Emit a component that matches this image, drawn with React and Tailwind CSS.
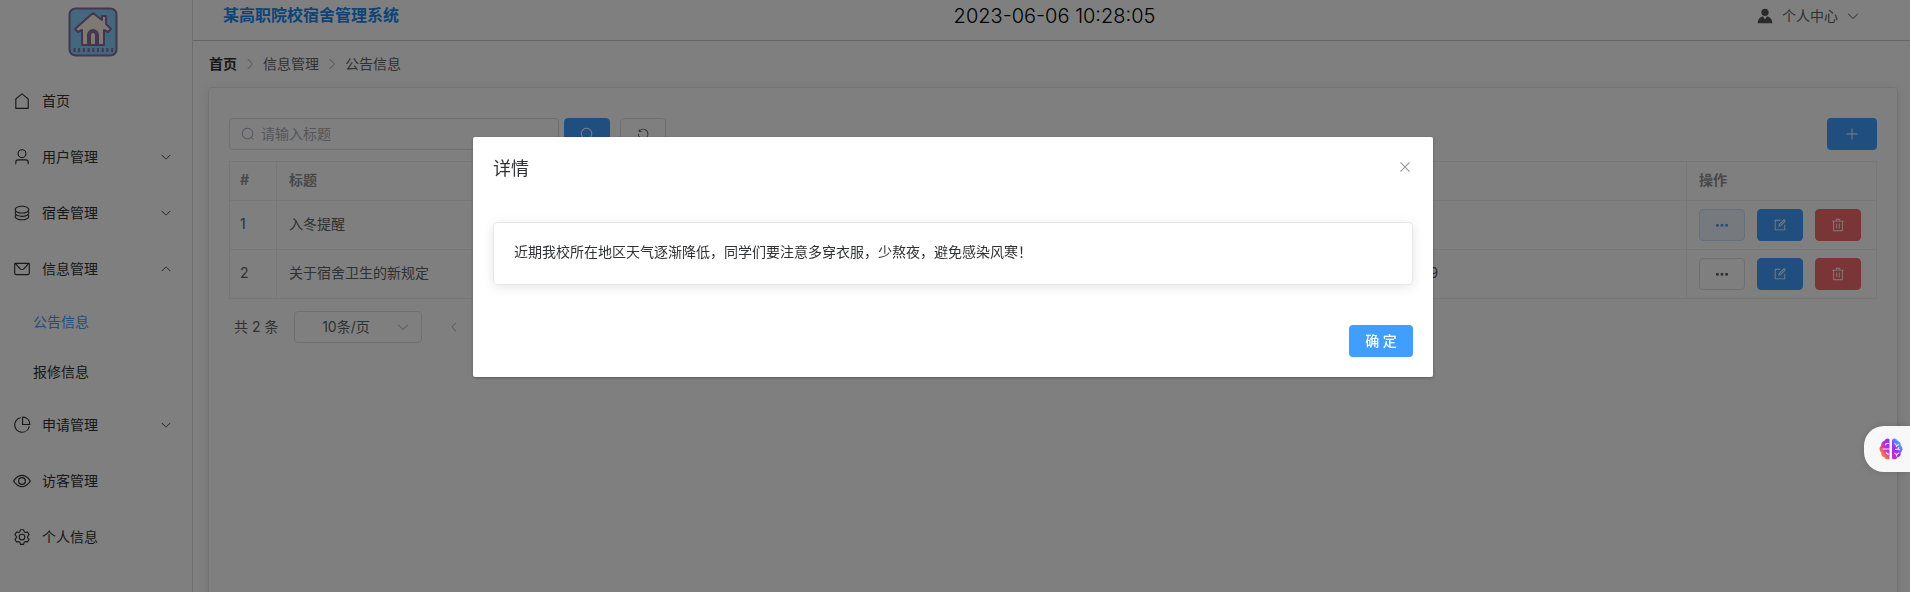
import React, { useId } from 'react';

const PATHS = {
  arrowDown: [
    'M831.872 340.864 512 652.672 192.128 340.864a30.592 30.592 0 0 0-42.752 0 29.12 29.12 0 0 0 0 41.6L489.664 714.24a32 32 0 0 0 44.672 0l340.288-331.712a29.12 29.12 0 0 0 0-41.728 30.592 30.592 0 0 0-42.752 0z',
  ],
  arrowRight: [
    'M340.864 149.312a30.592 30.592 0 0 0 0 42.752L652.736 512 340.864 831.872a30.592 30.592 0 0 0 0 42.752 29.12 29.12 0 0 0 41.728 0L714.24 534.336a32 32 0 0 0 0-44.672L382.592 149.376a29.12 29.12 0 0 0-41.728 0z',
  ],
  close: [
    'M764.288 214.592 512 466.88 259.712 214.592a31.936 31.936 0 0 0-45.12 45.12L466.752 512 214.528 764.224a31.936 31.936 0 1 0 45.12 45.184L512 557.184l252.288 252.288a31.936 31.936 0 0 0 45.12-45.12L557.12 512.064l252.288-252.352a31.936 31.936 0 1 0-45.12-45.184z',
  ],
  search: [
    'm795.904 750.72 124.992 124.928a32 32 0 0 1-45.248 45.248L750.656 795.904a416 416 0 1 1 45.248-45.248zM480 832a352 352 0 1 0 0-704 352 352 0 0 0 0 704z',
  ],
  house: [
    'M192 413.952V896h640V413.952L512 147.328 192 413.952zM139.52 374.4l352-293.312a32 32 0 0 1 40.96 0l352 293.312A32 32 0 0 1 896 398.976V928a32 32 0 0 1-32 32H160a32 32 0 0 1-32-32V398.976a32 32 0 0 1 11.52-24.576z',
  ],
  user: [
    'M512 512a192 192 0 1 0 0-384 192 192 0 0 0 0 384m0 64a256 256 0 1 1 0-512 256 256 0 0 1 0 512zm320 320v-96a96 96 0 0 0-96-96H288a96 96 0 0 0-96 96v96a32 32 0 1 1-64 0v-96a160 160 0 0 1 160-160h448a160 160 0 0 1 160 160v96a32 32 0 1 1-64 0z',
  ],
  coin: [
    'm161.92 580.736 29.888 58.88C171.328 659.776 160 681.728 160 704c0 82.304 155.328 160 352 160s352-77.696 352-160c0-22.272-11.392-44.16-31.808-64.32l30.464-58.432C903.936 615.808 928 657.664 928 704c0 129.728-188.544 224-416 224S96 833.728 96 704c0-46.592 24.32-88.576 65.92-123.264z',
    'm161.92 388.736 29.888 58.88C171.328 467.84 160 489.792 160 512c0 82.304 155.328 160 352 160s352-77.696 352-160c0-22.272-11.392-44.16-31.808-64.32l30.464-58.432C903.936 423.808 928 465.664 928 512c0 129.728-188.544 224-416 224S96 641.728 96 512c0-46.592 24.32-88.576 65.92-123.264z',
    'M512 544c-227.456 0-416-94.272-416-224S284.544 96 512 96s416 94.272 416 224-188.544 224-416 224zm0-64c196.672 0 352-77.696 352-160S708.672 160 512 160s-352 77.696-352 160 155.328 160 352 160z',
  ],
  message: [
    'M128 224v512a64 64 0 0 0 64 64h640a64 64 0 0 0 64-64V224H128zm0-64h768a64 64 0 0 1 64 64v512a128 128 0 0 1-128 128H192A128 128 0 0 1 64 736V224a64 64 0 0 1 64-64z',
    'M904 224 656.512 506.88a192 192 0 0 1-289.024 0L120 224h784zm-698.944 0 210.56 240.704a128 128 0 0 0 192.704 0L818.944 224H205.056z',
  ],
  pie: [
    'M448 68.48v64.832A384.128 384.128 0 0 0 512 896a384.128 384.128 0 0 0 378.688-320h64.768A448.128 448.128 0 0 1 64 512 448.128 448.128 0 0 1 448 68.48z',
    'M576 97.28V448h350.72A384.064 384.064 0 0 0 576 97.28zM512 64V33.152A448 448 0 0 1 990.848 512H512V64z',
  ],
  view: [
    'M512 160c320 0 512 352 512 352S832 864 512 864 0 512 0 512s192-352 512-352zm0 64c-225.28 0-384.128 208.064-436.8 288 52.608 79.872 211.456 288 436.8 288 225.28 0 384.128-208.064 436.8-288-52.608-79.872-211.456-288-436.8-288zm0 64a224 224 0 1 1 0 448 224 224 0 0 1 0-448zm0 64a160.192 160.192 0 0 0-160 160c0 88.192 71.744 160 160 160s160-71.808 160-160-71.744-160-160-160z',
  ],
  setting: [
    'M600.704 64a32 32 0 0 1 30.464 22.208l35.2 109.376c14.784 7.232 28.928 15.36 42.432 24.512l112.384-24.192a32 32 0 0 1 34.432 15.36L944.32 364.8a32 32 0 0 1-4.032 37.504l-77.12 85.12a357.12 357.12 0 0 1 0 49.024l77.12 85.248a32 32 0 0 1 4.032 37.504l-88.704 153.6a32 32 0 0 1-34.432 15.296L708.8 803.904c-13.44 9.088-27.648 17.28-42.368 24.512l-35.264 109.376A32 32 0 0 1 600.704 960H423.296a32 32 0 0 1-30.464-22.208L357.696 828.48a351.616 351.616 0 0 1-42.56-24.64l-112.32 24.256a32 32 0 0 1-34.432-15.36L79.68 659.2a32 32 0 0 1 4.032-37.504l77.12-85.248a357.12 357.12 0 0 1 0-48.896l-77.12-85.248A32 32 0 0 1 79.68 364.8l88.704-153.6a32 32 0 0 1 34.432-15.296l112.32 24.256c13.568-9.152 27.776-17.408 42.56-24.64l35.2-109.312A32 32 0 0 1 423.232 64H600.64zm-23.424 64H446.72l-36.352 113.088-24.512 11.968a294.113 294.113 0 0 0-34.816 20.096l-22.656 15.36-116.224-25.088-65.28 113.152 79.68 88.192-1.92 27.136a293.12 293.12 0 0 0 0 40.192l1.92 27.136-79.808 88.192 65.344 113.152 116.224-25.024 22.656 15.296a294.113 294.113 0 0 0 34.816 20.096l24.512 11.968L446.72 896h130.688l36.48-113.152 24.448-11.904a288.282 288.282 0 0 0 34.752-20.096l22.592-15.296 116.288 25.024 65.28-113.152-79.744-88.192 1.92-27.136a293.12 293.12 0 0 0 0-40.256l-1.92-27.136 79.808-88.128-65.344-113.152-116.288 24.96-22.592-15.232a287.616 287.616 0 0 0-34.752-20.096l-24.448-11.904L577.344 128zM512 320a192 192 0 1 1 0 384 192 192 0 0 1 0-384zm0 64a128 128 0 1 0 0 256 128 128 0 0 0 0-256z',
  ],
  avatar: [
    'M628.736 528.896A416 416 0 0 1 928 928H96a415.872 415.872 0 0 1 299.264-399.104L512 704l116.736-175.104zM720 304a208 208 0 1 1-416 0 208 208 0 0 1 416 0z',
  ],
  plus: [
    'M480 480V128a32 32 0 0 1 64 0v352h352a32 32 0 1 1 0 64H544v352a32 32 0 1 1-64 0V544H128a32 32 0 0 1 0-64h352z',
  ],
  more: [
    'M176 416a112 112 0 1 1 0 224 112 112 0 0 1 0-224zm336 0a112 112 0 1 1 0 224 112 112 0 0 1 0-224zm336 0a112 112 0 1 1 0 224 112 112 0 0 1 0-224z',
  ],
  edit: [
    'M832 512a32 32 0 1 1 64 0v352a32 32 0 0 1-32 32H160a32 32 0 0 1-32-32V160a32 32 0 0 1 32-32h352a32 32 0 0 1 0 64H192v640h640V512z',
    'm469.952 554.24 52.8-7.552L847.104 222.4a32 32 0 1 0-45.248-45.248L477.44 501.44l-7.552 52.8zm422.4-422.4a96 96 0 0 1 0 135.808l-331.84 331.84a32 32 0 0 1-18.112 9.088L436.8 623.68a32 32 0 0 1-36.224-36.224l15.104-105.6a32 32 0 0 1 9.024-18.112l331.904-331.84a96 96 0 0 1 135.744 0z',
  ],
  trash: [
    'M160 256H96a32 32 0 0 1 0-64h256V95.936a32 32 0 0 1 32-32h256a32 32 0 0 1 32 32V192h256a32 32 0 1 1 0 64h-64v672a32 32 0 0 1-32 32H192a32 32 0 0 1-32-32V256zm448-64v-64H416v64h192zM224 896h576V256H224v640zm192-128a32 32 0 0 1-32-32V416a32 32 0 0 1 64 0v320a32 32 0 0 1-32 32zm192 0a32 32 0 0 1-32-32V416a32 32 0 0 1 64 0v320a32 32 0 0 1-32 32z',
  ],
  refresh: [
    'M289.088 296.704h92.992a32 32 0 0 1 0 64H232.96a32 32 0 0 1-32-32V179.712a32 32 0 0 1 64 0v50.56a384 384 0 0 1 643.84 282.88 384 384 0 0 1-383.936 384 384 384 0 0 1-384-384h64a320 320 0 1 0 640 0 320 320 0 0 0-555.712-216.448z',
  ],
};

function Icon({ name, className = 'size-[14px]' }) {
  return (
    <svg viewBox="0 0 1024 1024" fill="currentColor" aria-hidden="true" className={className}>
      {PATHS[name].map((d) => (
        <path key={d} d={d} />
      ))}
    </svg>
  );
}

function Logo() {
  return (
    <svg viewBox="0 0 50 50" className="size-[50px]" aria-hidden="true">
      <rect x="1.5" y="1.5" width="47" height="47" rx="6" fill="#87cefa" stroke="#8a6a9e" strokeWidth="2" />
      <path
        d="M25 6 7 22l3 3 4-2v15h6V28a5 5 0 0 1 10 0v10h6V23l4 2 3-3-5-5V9h-4v4z"
        fill="#fbf5e9"
        stroke="#8a6a9e"
        strokeWidth="2"
        strokeLinejoin="round"
      />
      <path d="M22 38V28a3 3 0 0 1 6 0v10z" fill="#fbf5e9" stroke="#8a6a9e" strokeWidth="2" />
      <path d="M6.500 41v4M11.200 41v4M15.900 41v4M20.600 41v4M25.300 41v4M30 41v4M34.700 41v4M39.400 41v4M44.100 41v4" stroke="#8a6a9e" strokeWidth="2" />
    </svg>
  );
}

function Brain() {
  const id = useId();
  return (
    <svg viewBox="0 0 24 24" className="size-6" aria-hidden="true">
      <defs>
        <linearGradient id={id} x1="1" y1="20" x2="22" y2="4" gradientUnits="userSpaceOnUse">
          <stop offset="0.08" stopColor="#ff8a1f" />
          <stop offset="0.38" stopColor="#c92bd0" />
          <stop offset="0.62" stopColor="#a12bf0" />
          <stop offset="0.95" stopColor="#3db2ff" />
        </linearGradient>
      </defs>
      <path
        fill={`url(#${id})`}
        d="M11 3v18.500c-1.200 1.300-4.600 1.300-5.600-1.300C3 20 1.600 17.500 2.400 15.500-.2 14 0 10 2.300 8.800 1.800 6 3.500 4.200 5.300 4 6.500.9 9.800.6 11 3zM13 3c1.200-2.400 4.500-2.100 5.700 1 1.800.2 3.500 2 3 4.800C24 10 24.200 14 21.600 15.500c.8 2-.6 4.500-3.200 4.700-1 2.600-4.200 2.600-5.400 1.300z"
      />
      <path
        d="M10.500 6.500H7.500L6 8M3.500 12H11M10.500 17H8.500L7 15.500M15.500 6l2 2.500 2.500-1M17.500 8.500v1.500M16 12.500l3-.5 1-2M19 12l2 1M15.500 16l2 1.500 2.500-1.500M17.500 17.500v2"
        fill="none"
        stroke="#f3e0ff"
        strokeWidth="1.1"
      />
      <path d="M11 3v18.500" stroke="#f8f8f8" strokeWidth="1" />
    </svg>
  );
}

const MENU = [
  { icon: 'house', label: '首页' },
  { icon: 'user', label: '用户管理', group: true },
  { icon: 'coin', label: '宿舍管理', group: true },
  { icon: 'message', label: '信息管理', group: true, children: ['公告信息', '报修信息'] },
  { icon: 'pie', label: '申请管理', group: true },
  { icon: 'view', label: '访客管理' },
  { icon: 'setting', label: '个人信息' },
];

const ROWS = [
  { id: 1, title: '入冬提醒', date: '2022-11-1', active: true },
  { id: 2, title: '关于宿舍卫生的新规定', date: '2022-11-19', active: false },
];

function Sidebar() {
  return (
    <aside className="flex w-[193px] shrink-0 flex-col border-r border-[#dcdfe6] text-[#303133]">
      <div className="flex h-[73px] justify-center pt-[7px] pr-[6px]">
        <Logo />
      </div>
      <nav>
        <ul>
          {MENU.map((item) => (
            <li key={item.label}>
              <a href="#" className="flex h-14 items-center gap-2 pr-5 pl-[10px]">
                <span className="flex w-6 justify-center">
                  <Icon name={item.icon} className="size-[18px]" />
                </span>
                <span className="flex-1">{item.label}</span>
                {item.group && (
                  <Icon name="arrowDown" className={item.children ? 'size-3 rotate-180' : 'size-3'} />
                )}
              </a>
              {item.children && (
                <ul>
                  {item.children.map((child, i) => (
                    <li key={child}>
                      <a
                        href="#"
                        className={
                          i === 0
                            ? 'flex h-[50px] items-center pl-[33px] text-[#409eff]'
                            : 'flex h-[50px] items-center pl-[33px]'
                        }
                      >
                        {child}
                      </a>
                    </li>
                  ))}
                </ul>
              )}
            </li>
          ))}
        </ul>
      </nav>
    </aside>
  );
}

function Header() {
  return (
    <header className="grid h-[41px] grid-cols-[1fr_auto_1fr] items-start border-b border-[#c8c8c8] pr-6 pl-[30px]">
      <h1 className="pt-[3px] text-base leading-6 font-bold text-[#1c86ee]">某高职院校宿舍管理系统</h1>
      <time className="pt-[2px] text-xl leading-7 font-light text-black">2023-06-06 10:28:05</time>
      <button type="button" className="flex items-center gap-2 justify-self-end pt-[5px] pr-[26px] leading-[22px] text-[#606266]">
        <Icon name="avatar" className="size-[18px] text-[#555]" />
        个人中心
        <Icon name="arrowDown" />
      </button>
    </header>
  );
}

function Breadcrumb() {
  return (
    <nav className="py-[13px] pl-px">
      <ol className="flex items-center gap-[6px] leading-5 text-[#606266]">
        <li>
          <a href="#" className="font-bold text-[#303133]">首页</a>
        </li>
        <li><Icon name="arrowRight" className="size-[14px] text-[#a8abb2]" /></li>
        <li>信息管理</li>
        <li><Icon name="arrowRight" className="size-[14px] text-[#a8abb2]" /></li>
        <li>公告信息</li>
      </ol>
    </nav>
  );
}

const BUTTON = 'flex h-8 w-[46px] items-center justify-center rounded border ';

function Toolbar() {
  return (
    <div className="flex items-center">
      <label className="flex h-8 w-[330px] items-center gap-[6px] rounded border border-[#dcdfe6] px-[11px] text-[#a8abb2]">
        <Icon name="search" />
        <input
          type="text"
          aria-label="标题"
          placeholder="请输入标题"
          className="min-w-0 flex-1 bg-transparent outline-none placeholder:text-[#a8abb2]"
        />
      </label>
      <button type="button" aria-label="搜索" className={BUTTON + 'ml-[5px] border-[#409eff] bg-[#409eff] text-white'}>
        <Icon name="search" />
      </button>
      <button type="button" aria-label="重置" className={BUTTON + 'ml-[10px] border-[#dcdfe6] text-[#606266]'}>
        <Icon name="refresh" />
      </button>
      <button type="button" aria-label="新增" className="ml-auto flex h-8 w-[50px] items-center justify-center rounded bg-[#409eff] text-white">
        <Icon name="plus" />
      </button>
    </div>
  );
}

function DataTable() {
  const border = 'border border-[#ebeef5] text-left ';
  const textCell = border + 'px-3 pb-[2px] ';
  const indexCell = border + 'px-[10px] pb-[2px] ';
  return (
    <table className="mt-[11px] w-full table-fixed border-collapse text-[#606266]">
      <colgroup>
        <col className="w-[47px]" />
        <col />
        <col className="w-[334px]" />
        <col className="w-[190px]" />
      </colgroup>
      <thead>
        <tr className="h-[39px] text-[#909399]">
          <th className={indexCell + 'font-bold'}>#</th>
          <th className={textCell + 'font-bold'}>标题</th>
          <th className="border-y border-[#ebeef5]" />
          <th className={textCell + 'font-bold'}>操作</th>
        </tr>
      </thead>
      <tbody>
        {ROWS.map((row) => (
          <tr key={row.id} className="h-[49px]">
            <td className={indexCell}>{row.id}</td>
            <td className={textCell}>{row.title}</td>
            <td className="border-y border-[#ebeef5] px-3 pb-[2px]">{row.date}</td>
            <td className={border + 'px-3'}>
              <div className="flex gap-3">
                <button
                  type="button"
                  aria-label="详情"
                  className={
                    row.active
                      ? BUTTON + 'border-[#c6e2ff] bg-[#ecf5ff] text-[#409eff]'
                      : BUTTON + 'border-[#dcdfe6] bg-white text-[#606266]'
                  }
                >
                  <Icon name="more" />
                </button>
                <button type="button" aria-label="编辑" className={BUTTON + 'border-[#409eff] bg-[#409eff] text-white'}>
                  <Icon name="edit" />
                </button>
                <button type="button" aria-label="删除" className={BUTTON + 'border-[#f56c6c] bg-[#f56c6c] text-white'}>
                  <Icon name="trash" />
                </button>
              </div>
            </td>
          </tr>
        ))}
      </tbody>
    </table>
  );
}

function Pagination() {
  return (
    <div className="mt-3 flex items-center gap-4 pl-[5px] text-[#606266]">
      <span>共 2 条</span>
      <span className="flex h-8 w-32 items-center rounded border border-[#dcdfe6] pr-[11px]">
        <select aria-label="每页条数" className="min-w-0 flex-1 appearance-none bg-transparent text-center outline-none">
          <option>10条/页</option>
        </select>
        <Icon name="arrowDown" className="size-[14px] text-[#a8abb2]" />
      </span>
      <button type="button" aria-label="上一页" className="flex size-8 items-center justify-center text-[#a8abb2]">
        <Icon name="arrowRight" className="size-3 rotate-180" />
      </button>
    </div>
  );
}

function DetailDialog() {
  return (
    <div className="fixed inset-0 flex items-start justify-center bg-black/50 pt-[137px] pr-1">
      <section
        role="dialog"
        aria-labelledby="detail-title"
        className="w-[960px] rounded-[2px] bg-white p-5 shadow-[0_1px_3px_rgba(0,0,0,0.3)]"
      >
        <div className="flex items-start justify-between pb-10">
          <h2 id="detail-title" className="pb-px text-lg leading-6 text-[#303133]">详情</h2>
          <button type="button" aria-label="关闭" className="pt-[2px] text-[#909399]">
            <Icon name="close" className="size-4" />
          </button>
        </div>
        <p className="rounded border border-[#e4e7ed] px-5 pt-[19px] pb-[22px] leading-5 text-[#303133] shadow-[0_2px_12px_rgba(0,0,0,0.1)]">
          近期我校所在地区天气逐渐降低，同学们要注意多穿衣服，少熬夜，避免感染风寒！
        </p>
        <div className="flex justify-end pt-10">
          <button type="button" className="h-8 w-16 rounded bg-[#409eff] font-medium text-white">确 定</button>
        </div>
      </section>
    </div>
  );
}

export default function App() {
  return (
    <div className="flex h-screen overflow-hidden bg-white font-['Inter','Noto_Sans_CJK_SC',sans-serif] text-sm">
      <Sidebar />
      <div className="flex min-w-0 flex-1 flex-col">
        <Header />
        <main className="flex min-h-0 flex-1 flex-col pr-3 pl-[15px]">
          <Breadcrumb />
          <section className="min-h-screen rounded border border-[#e4e7ed] px-5 pt-[30px] shadow-[0_2px_12px_rgba(0,0,0,0.1)]">
            <Toolbar />
            <DataTable />
            <Pagination />
          </section>
        </main>
      </div>
      <DetailDialog />
      <button
        type="button"
        aria-label="助手"
        className="fixed top-[426px] right-0 flex h-[46px] w-[46px] items-center rounded-l-[20px] bg-[#f8f8f8] pl-[15px] shadow-[0_0_8px_rgba(0,0,0,0.15)]"
      >
        <Brain />
      </button>
    </div>
  );
}
